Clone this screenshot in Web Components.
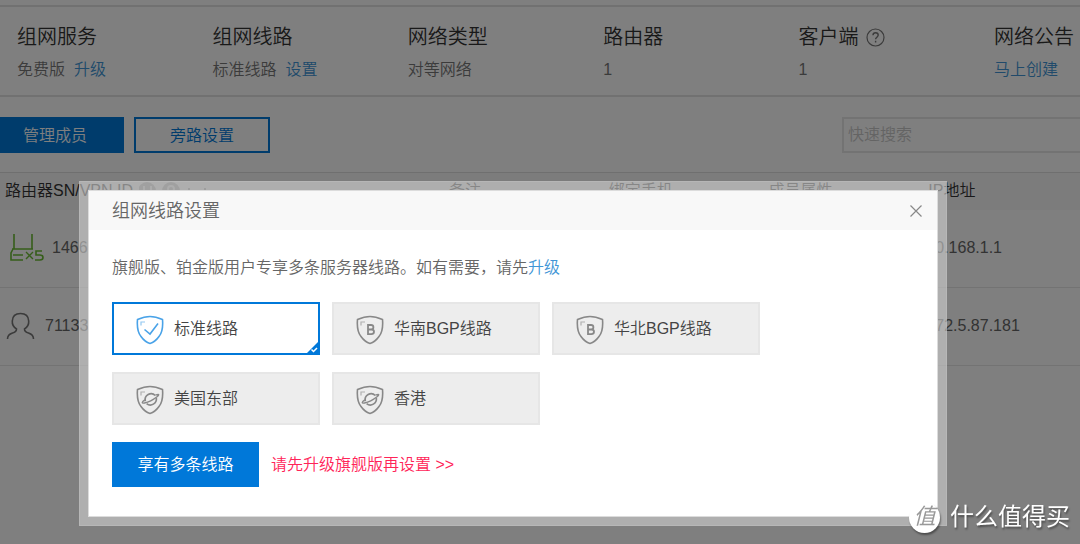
<!DOCTYPE html>
<html lang="zh-CN">
<head>
<meta charset="utf-8">
<title>组网线路设置</title>
<style>
  html { height: 100%; }
  body {
    margin: 0; min-height: 100%; overflow: hidden; background: #fff; color: #333;
    font: 350 16px/24px "Liberation Sans", "Noto Sans CJK SC", sans-serif;
    --blue: #0078d9; --link: #4095d6; --line: #e6e6e6; --muted: #777;
  }
</style>
</head>
<body>
<network-page></network-page>
<route-dialog></route-dialog>
<site-mark></site-mark>

<script>
const define = (name, html) => customElements.define(name, class extends HTMLElement {
  constructor() {
    super();
    const t = document.createElement('template');
    t.innerHTML = html;
    this.attachShadow({ mode: 'open' }).append(t.content.cloneNode(true));
  }
});

/* One summary figure: heading in the "title" slot, value in the default slot */
define('stat-item', `
<style>
  :host { display: block; white-space: nowrap; }
  h2 { margin: 0 0 6px; font-size: 20px; line-height: 30px; font-weight: inherit; display: flex; align-items: center; gap: 7px; color: #333; }
  p { margin: 0; color: var(--muted); display: flex; gap: 9px; }
  ::slotted(a) { color: var(--link); text-decoration: none; }
</style>
<h2><slot name="title"></slot><slot name="icon"></slot></h2>
<p><slot></slot></p>`);

define('stats-bar', `
<style>
  :host { display: grid; grid-template-columns: repeat(5, 1fr) 86px; padding: 15px 0 13px 17px; border: solid #e2e2e2; border-width: 2px 0; }
</style>
<slot></slot>`);

define('member-toolbar', `
<style>
  :host { display: flex; gap: 10px; padding: 20px 0 19px; }
  button { box-sizing: border-box; height: 36px; padding: 2px 0 0; font: inherit; border: 2px solid var(--blue); }
  .main { width: 124px; padding-right: 12px; background: var(--blue); color: #fff; border-left: 0; }
  .side { width: 136px; background: #fff; color: var(--blue); }
  input { box-sizing: border-box; width: 242px; height: 36px; margin: 0 -4px 0 auto; padding: 0 4px; border: 2px solid var(--line); background: #fff; font: inherit; color: #333; border-radius: 0; }
  input::placeholder { color: #c8c8c8; opacity: 1; }
</style>
<button class="main">管理成员</button>
<button class="side">旁路设置</button>
<input type="search" placeholder="快速搜索" aria-label="快速搜索">`);

define('member-table', `
<style>
  :host { display: block; }
  table { width: 100%; table-layout: fixed; border-collapse: collapse; }
  th, td { padding: 0 0 0 5px; text-align: left; font-weight: inherit; border-bottom: 1px solid var(--line); white-space: nowrap; }
  thead tr { height: 37px; background: #f9f9f9; }
  th { border-top: 1px solid #dedede; border-bottom: 0; color: #333; }
  td { height: 77px; color: #666; padding-left: 3px; }
  .c1 { width: 41.1%; } .c2, .c3 { width: 14.8%; } .c4 { width: 14.8%; }
  .id { display: flex; align-items: center; gap: 8px; padding-left: 6px; }
  .user { gap: 10px; padding-left: 3px; }
  .head { display: flex; align-items: center; gap: 6px; }
  svg { display: block; }
</style>
<table>
  <colgroup><col class="c1"><col class="c2"><col class="c3"><col class="c4"><col></colgroup>
  <thead><tr>
    <th><span class="head">路由器SN/VPN ID
      <svg width="72" height="20" viewBox="0 0 72 20" fill="none"><circle cx="8" cy="10" r="9" fill="#b4b4b4"/><path d="M5 5v6h7V5" stroke="#eee" stroke-width="2"/><circle cx="32" cy="10" r="9" fill="#b4b4b4"/><circle cx="32" cy="8" r="3" stroke="#eee" stroke-width="2"/><path d="M50 7v6M66 7v6" stroke="#555"/></svg></span></th>
    <th>备注</th><th>绑定手机</th><th>成员属性</th><th>IP地址</th>
  </tr></thead>
  <tbody>
    <tr>
      <td><span class="id">
        <svg width="35" height="30" viewBox="0 0 35 30" fill="none" stroke="#6cbc34" stroke-width="1.600"><path d="M5 1v15M23 1v15M3 16h21M4 16l-2 4v7h12M4 22h10"/><path d="M17 19l7 7M24 19l-7 7" stroke-width="1.400"/><path d="M33 18h-6v4h4q3 0 3 2.500t-3 2.500h-5"/></svg>
        1466</span></td>
      <td></td><td></td><td></td><td>10.168.1.1</td>
    </tr>
    <tr>
      <td><span class="id user">
        <svg width="29" height="28" viewBox="0 0 29 28" fill="none" stroke="#777" stroke-width="1.600"><path d="M1.500 27c0-4 2-5 5-6 3-.8 4-1.600 4-4-3-2-4.500-4.500-4.200-8C6.500 4 9 1.500 14.500 1.500S22.500 4 22.700 9c.3 3.500-1.200 6-4.200 8 0 2.400 1 3.200 4 4 3 1 5 2 5 6"/></svg>
        71133</span></td>
      <td></td><td></td><td></td><td>172.5.87.181</td>
    </tr>
  </tbody>
</table>`);

define('network-page', `
<style>
  :host { display: block; padding-top: 5px; }
  .q { display: block; }
</style>
<stats-bar>
  <stat-item><span slot="title">组网服务</span><span>免费版</span><a href="#">升级</a></stat-item>
  <stat-item><span slot="title">组网线路</span><span>标准线路</span><a href="#">设置</a></stat-item>
  <stat-item><span slot="title">网络类型</span><span>对等网络</span></stat-item>
  <stat-item><span slot="title">路由器</span><span>1</span></stat-item>
  <stat-item><span slot="title">客户端</span>
    <svg slot="icon" class="q" width="19" height="19" viewBox="0 0 19 19" fill="none" stroke="#777"><circle cx="9.500" cy="9.500" r="8.500" stroke-width="1.200"/><path d="M7 7.300c0-3.400 5.200-3.200 5.200-.2 0 2-2.600 2.200-2.600 4.200M9.600 12.800v1.700" stroke-width="1.400"/></svg>
    <span>1</span></stat-item>
  <stat-item><span slot="title">网络公告</span><a href="#">马上创建</a></stat-item>
</stats-bar>
<member-toolbar></member-toolbar>
<member-table></member-table>`);

/* Shield glyph; the "kind" attribute picks the emblem inside it */
customElements.define('shield-icon', class extends HTMLElement {
  connectedCallback() {
    const emblem = {
      check: '<path d="M8.500 14.500l5.500 4.500 8-10.500" stroke-width="1.600"/>',
      bgp: '<path d="M12 10h3c3.200 0 3.200 4.500 0 4.500h-3zM12 14.500h3.300c3.600 0 3.600 4.700 0 4.700H12z" stroke-width="1.800"/>',
      planet: '<path d="M9.300 16.200A6 6 0 0 1 19.300 10.500M20.300 13A6 6 0 0 1 10.600 18.600" stroke-width="1.700"/><path d="M8.800 14.800C5.500 17 5.500 18.600 8.500 18c4-.8 9-3.500 12.500-6.300 2.800-2.400 2-3-1.500-1.600" stroke-width="1.400"/>'
    }[this.getAttribute('kind')];
    this.attachShadow({ mode: 'open' }).innerHTML = `
      <style>:host { display: block; } svg { display: block; }</style>
      <svg width="28" height="30" viewBox="0 0 28 30" fill="none" stroke="currentColor" stroke-width="1.600" aria-hidden="true">
        <path d="M14 1.500C10 1.500 5 3 1.500 4.500c-.6 7 .3 13 3.500 17 2.500 3.500 5.500 6 9 7 3.500-1 6.500-3.500 9-7 3.200-4 4.100-10 3.500-17C23 3 18 1.500 14 1.500z"/>
        <path d="M5 10.500V7h4" stroke-width="1.200" opacity=".6"/>${emblem}
      </svg>`;
  }
});

customElements.define('route-option', class extends HTMLElement {
  connectedCallback() {
    const on = this.hasAttribute('selected');
    this.attachShadow({ mode: 'open' }).innerHTML = `
      <style>
        :host { display: block; }
        label { position: relative; display: flex; align-items: center; gap: 10px; box-sizing: border-box; height: 53px; padding-left: 22px; background: #ededed; border: 2px solid #e6e6e6; color: #444; cursor: pointer; }
        label.on { background: #fff; border-color: var(--blue); }
        shield-icon { color: #888; padding-top: 3px; }
        .on shield-icon { color: #4aa3e8; }
        input { position: absolute; opacity: 0; margin: 0; }
        .corner { position: absolute; right: 0; bottom: 0; }
      </style>
      <label class="${on ? 'on' : ''}">
        <input type="radio" name="route" ${on ? 'checked' : ''}>
        <shield-icon kind="${this.getAttribute('kind')}"></shield-icon>
        <slot></slot>
        ${on ? '<svg class="corner" width="11" height="11" viewBox="0 0 11 11" fill="none"><path d="M11 0v11H0z" fill="#0078d9"/><path d="M4.500 7.500l2 2L10 6" stroke="#fff" stroke-width="1.500"/></svg>' : ''}
      </label>`;
  }
});

define('route-dialog', `
<style>
  :host { position: fixed; inset: 0; display: block; padding: 181px 133px 0 79px; background: rgba(0,0,0,.5); }
  .frame { padding: 8px; border: 1px solid rgba(206,206,206,.25); background: rgba(206,206,206,.6); }
  section { background: #fff; border: 1px solid #dcdcdc; }
  header { display: flex; align-items: center; justify-content: space-between; height: 39px; padding: 0 14px 0 23px; background: #f8f8f8; color: #666; }
  h1 { margin: 0; font-size: 18px; line-height: 24px; font-weight: inherit; }
  button { font: inherit; border: 0; padding: 0; cursor: pointer; }
  .close { background: none; width: 14px; height: 14px; }
  .close svg { display: block; }
  .body { padding: 26px 22px 29px 23px; }
  p { margin: 0 0 22px; color: #666; }
  a { color: var(--link); text-decoration: none; }
  .routes { display: grid; grid-template-columns: repeat(auto-fill, 208px); gap: 17px 12px; }
  footer { display: flex; align-items: center; gap: 12px; margin-top: 17px; }
  .go { width: 147px; height: 45px; background: var(--blue); color: #fff; }
  footer a { color: #ff2458; }
</style>
<div class="frame">
  <section role="dialog" aria-labelledby="t">
    <header><h1 id="t">组网线路设置</h1>
      <button class="close" aria-label="关闭"><svg width="14" height="14" viewBox="0 0 14 14" stroke="#888" stroke-width="1.200"><path d="M1.500 1.500l11 11M12.500 1.500l-11 11"/></svg></button></header>
    <div class="body">
      <p>旗舰版、铂金版用户专享多条服务器线路。如有需要，请先<a href="#">升级</a></p>
      <div class="routes">
        <route-option kind="check" selected>标准线路</route-option>
        <route-option kind="bgp">华南BGP线路</route-option>
        <route-option kind="bgp">华北BGP线路</route-option>
        <route-option kind="planet">美国东部</route-option>
        <route-option kind="planet">香港</route-option>
      </div>
      <footer><button class="go">享有多条线路</button><a href="#">请先升级旗舰版再设置 &gt;&gt;</a></footer>
    </div>
  </section>
</div>`);

define('site-mark', `
<style>
  :host { position: fixed; right: 10px; bottom: 11px; display: flex; align-items: center; gap: 10px; color: #fff; font-size: 24px; line-height: 32px; font-weight: 400; text-shadow: 1px 2px 2px rgba(0,0,0,.4); }
  .disc { width: 31px; height: 31px; border-radius: 50%; background: #fff; color: #999; font-size: 22px; line-height: 29px; font-style: italic; font-weight: 400; text-align: center; text-shadow: none; box-shadow: 1px 2px 2px rgba(0,0,0,.4); }
</style>
<span class="disc">值</span><span>什么值得买</span>`);
</script>
</body>
</html>
